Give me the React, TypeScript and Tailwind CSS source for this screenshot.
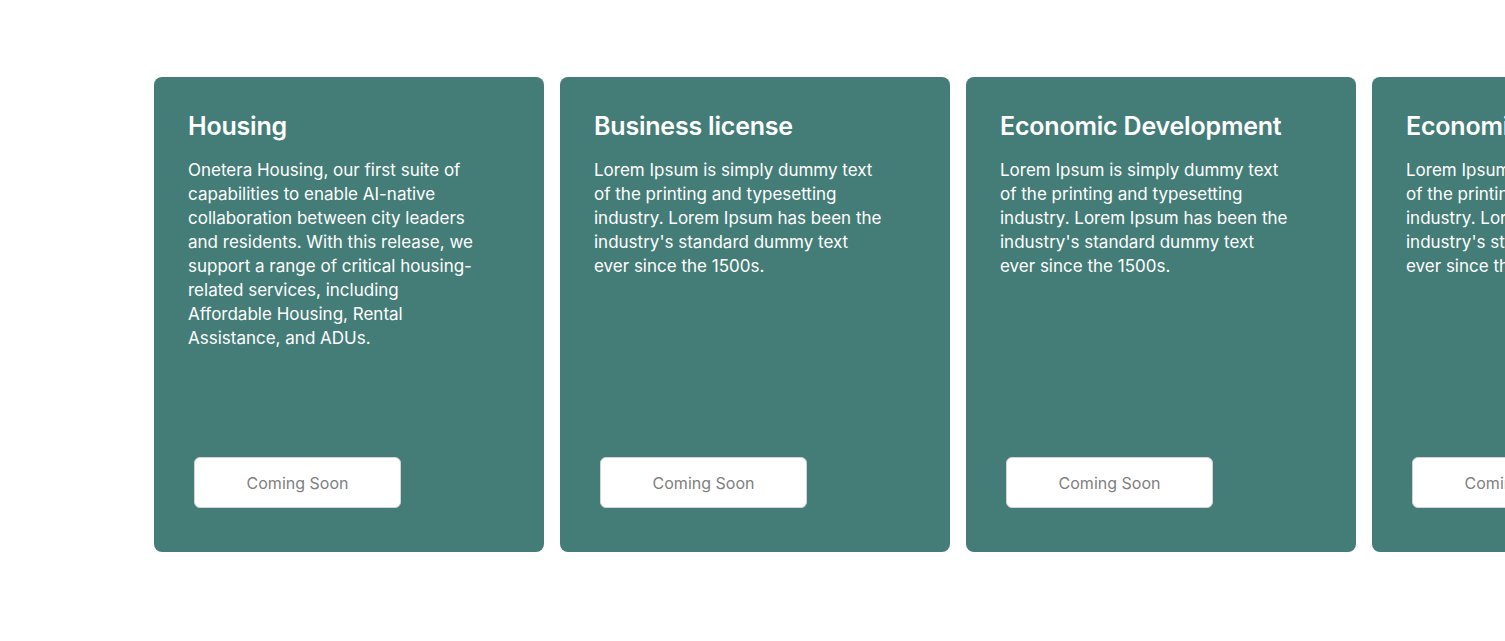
import React from "react";

const cards = [
  {
    title: "Housing",
    body: "Onetera Housing, our first suite of capabilities to enable AI-native collaboration between city leaders and residents. With this release, we support a range of critical housing-related services, including Affordable Housing, Rental Assistance, and ADUs.",
  },
  {
    title: "Business license",
    body: "Lorem Ipsum is simply dummy text of the printing and typesetting industry. Lorem Ipsum has been the industry's standard dummy text ever since the 1500s.",
  },
  {
    title: "Economic Development",
    body: "Lorem Ipsum is simply dummy text of the printing and typesetting industry. Lorem Ipsum has been the industry's standard dummy text ever since the 1500s.",
  },
  {
    title: "Economic Development",
    body: "Lorem Ipsum is simply dummy text of the printing and typesetting industry. Lorem Ipsum has been the industry's standard dummy text ever since the 1500s.",
  },
];

export default function App() {
  return (
    <div
      className="w-[1505px] h-[641px] bg-white overflow-hidden"
      style={{ fontFamily: "Inter, 'Noto Sans', sans-serif" }}
    >
      <div className="flex gap-4 pl-[154px] pt-[77px]">
        {cards.map((c, i) => (
          <div
            key={i}
            className="w-[390px] h-[475px] shrink-0 rounded-lg bg-[#447d77] flex flex-col pl-[34px] pt-[33px] pb-[44px]"
          >
            <h2 className="text-[25px] leading-[32px] font-semibold text-white tracking-[-0.2px] whitespace-nowrap">
              {c.title}
            </h2>
            <p className="mt-[16px] w-[292px] text-[17px] leading-[24px] text-white">
              {c.body}
            </p>
            <button className="mt-auto ml-[6px] w-[207px] h-[51px] rounded-md bg-white border border-[#d4d4d4] text-[16px] text-[#808080]">
              Coming Soon
            </button>
          </div>
        ))}
      </div>
    </div>
  );
}
